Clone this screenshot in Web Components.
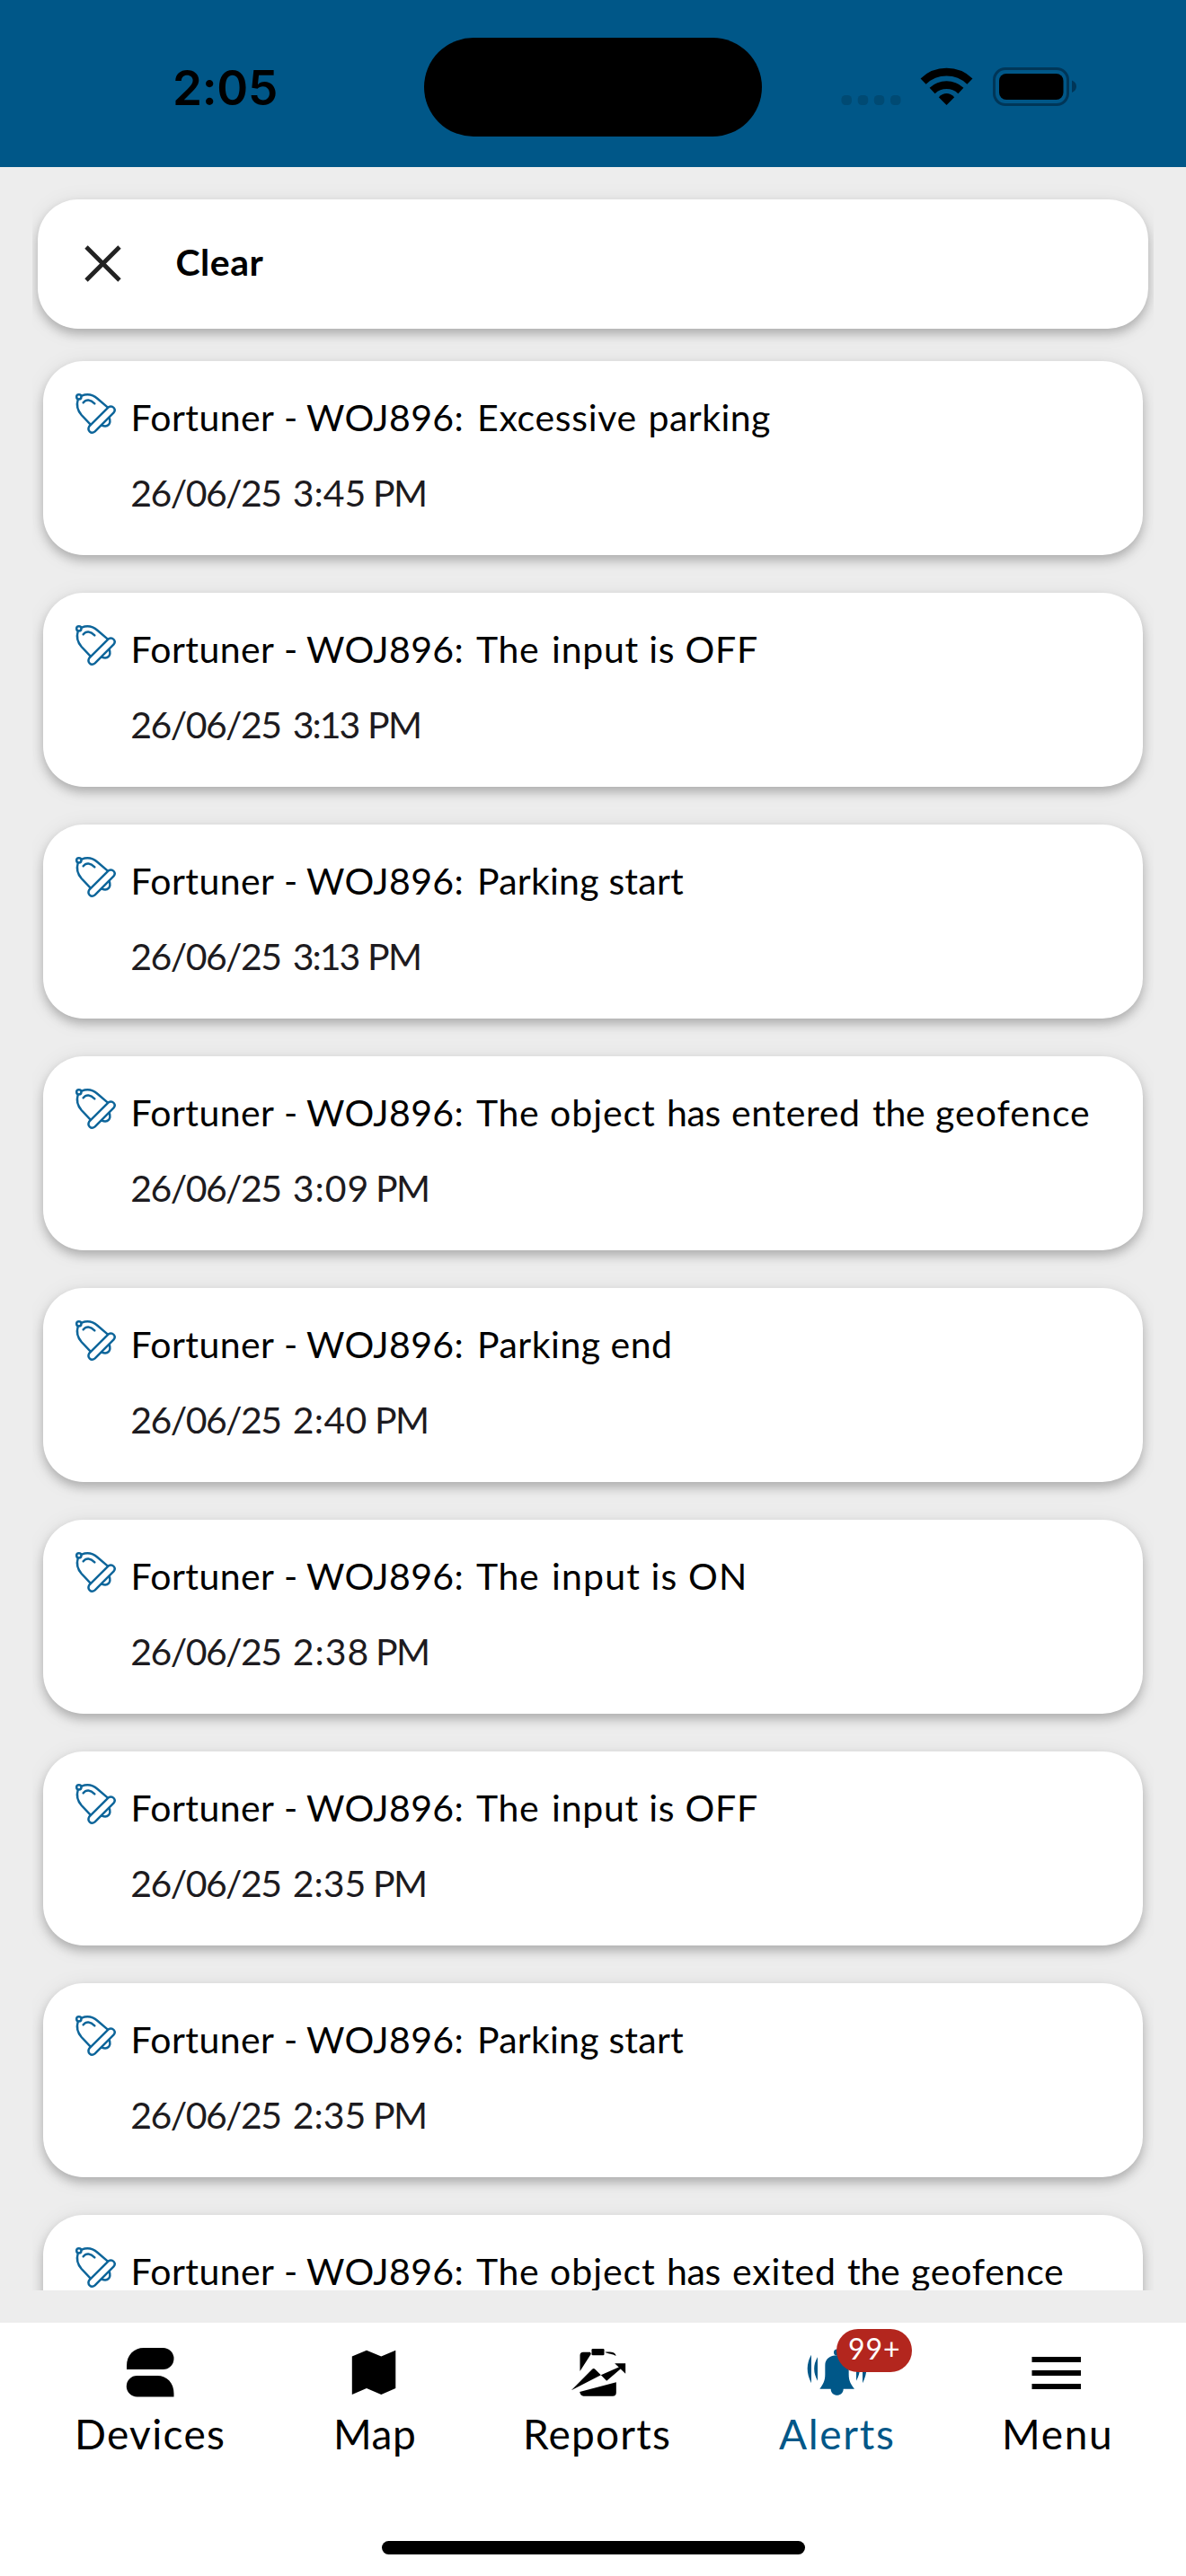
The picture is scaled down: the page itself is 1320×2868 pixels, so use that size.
<!DOCTYPE html>
<html lang="en">
<head>
<meta charset="utf-8">
<title>Alerts</title>
<style>
html,body{margin:0;padding:0}
body{width:1320px;height:2868px;overflow:hidden;background:#ededed;font-family:Lato,"Open Sans",sans-serif;color:#000}
</style>
</head>
<body>
<alerts-app></alerts-app>
<script>
const define = (name, html, setup) => customElements.define(name, class extends HTMLElement {
  connectedCallback() {
    if (this.shadowRoot) return;
    const t = document.createElement('template');
    t.innerHTML = typeof html === 'function' ? html(this) : html;
    this.attachShadow({mode: 'open'}).append(t.content.cloneNode(true));
    if (setup) setup(this);
  }
});

// A single line of text tracked so that each "|"-separated group of words
// inks exactly the matching "start end" pair in `ink` (pixels from the host's left).
const ctx = document.createElement('canvas').getContext('2d');
define('fit-text', `<style>
  :host{display:block;flex:none;white-space:pre}
  div{display:block;width:max-content}
</style><div></div>`, el => {
  const line = el.shadowRoot.querySelector('div');
  const cs = getComputedStyle(line);
  ctx.font = `${cs.fontWeight} ${cs.fontSize} ${cs.fontFamily}`;
  const space = ctx.measureText(' ').width;
  const stops = el.getAttribute('ink').split(',').map(p => p.trim().split(' ').map(Number));
  let pen = 0;
  el.getAttribute('text').split('|').forEach((text, i) => {
    const [a, b] = stops[i], m = ctx.measureText(text);
    const ink = m.actualBoundingBoxLeft + m.actualBoundingBoxRight;
    const track = text.length > 1 ? (b - a - ink) / (text.length - 1) : 0;
    const origin = a + m.actualBoundingBoxLeft;
    if (i) {
      const gap = document.createElement('span');
      gap.textContent = ' ';
      gap.style.letterSpacing = (origin - pen - space).toFixed(3) + 'px';
      line.append(gap);
    } else line.style.marginLeft = origin.toFixed(2) + 'px';
    const span = document.createElement('span');
    span.textContent = text;
    span.style.letterSpacing = track.toFixed(3) + 'px';
    line.append(span);
    pen = origin + m.width + text.length * track;
  });
  el.style.width = stops[stops.length - 1][1] + 'px';
});

define('status-bar', `<style>
  :host{display:flex;box-sizing:border-box;height:186px;background:#005788;padding:42px 0 0 195px}
  fit-text{font:600 53px/64px Inter,sans-serif;margin-top:24px}
  .island{flex:none;width:376px;height:110px;border-radius:55px;background:#000;margin-left:165px}
  svg{flex:none;margin:28px 0 0 84px;display:block}
</style>
<fit-text text="2:05" ink="0 112"></fit-text>
<div class="island"></div>
<svg width="270" height="54" viewBox="932 70 270 54">
  <g fill="#004a73"><rect x="936.5" y="106" width="11.5" height="11" rx="4.5"/><rect x="954.7" y="106" width="11.5" height="11" rx="4.5"/><rect x="972.8" y="106" width="11.5" height="11" rx="4.5"/><rect x="991" y="106" width="11.5" height="11" rx="4.5"/></g>
  <path d="M1027.6 90.6A37.5 37.5 0 0 1 1079.4 90.6M1037.6 101A23.2 23.2 0 0 1 1069.4 101" fill="none" stroke="#000" stroke-width="8.8"/>
  <path d="M1053.5 117L1044.8 108.2Q1053.5 100 1062.2 108.2Z"/>
  <rect x="1106.5" y="76.5" width="82" height="40" rx="12.5" fill="none" stroke="#003658" stroke-width="3"/>
  <rect x="1112" y="82" width="71.5" height="29" rx="8"/>
  <path d="M1193 89.5Q1198 91.5 1198 96.3T1193 103Z" fill="#003658"/>
</svg>`);

define('clear-card', `<style>
  :host{display:flex;align-items:flex-start;box-sizing:border-box;height:144px;margin:36px 6px 0;border-radius:45px;background:#fff;padding:51px 0 0 51.5px;
  box-shadow:0 6px 11px rgba(0,0,0,.22),0 3px 24px rgba(0,0,0,.08)}
  svg{display:block;width:41px;height:41px}
  fit-text{font:bold 41px/49px Lato,sans-serif;margin:-6px 0 0 62px}
</style>
<svg viewBox="0 0 41 41"><path d="M2 2L39 39M39 2L2 39" stroke="#222" stroke-width="4.8"/></svg>
<fit-text text="Clear" ink="0 97"></fit-text>`);

define('alert-card', el => {
  const date = el.getAttribute('date'), end = +el.getAttribute('date-end');
  return `<style>
  :host{display:block;flex:none;box-sizing:border-box;height:216px;margin:0 12px;border-radius:45px;background:#fff;padding:36px 0 0 36px;
  font:400 41px/49px Lato,sans-serif;box-shadow:0 6px 11px rgba(0,0,0,.22),0 3px 24px rgba(0,0,0,.08)}
  .row{display:flex;align-items:flex-start;height:51px}
  svg{display:block;width:45px;height:45px;margin-right:20px;flex:none;overflow:visible}
  .row fit-text{margin:2px 0 0 -149px}
  .date{margin:35px 0 0 -84px;color:#1d1b20}
</style>
<div class="row">
<svg viewBox="0 0 135 135" fill="none" stroke="#0d659a" stroke-width="7.4" stroke-linecap="round" stroke-linejoin="round">
  <circle cx="11.5" cy="11.5" r="8"/>
  <path d="M21 8C40 0 59 5 74 18L107 46M8 21C2 42 7 57 20 72L50 104M26 31C36 18 50 20 64 34"/>
  <path d="M110 46C124 39 138 52 127 65L65 127C52 138 38 124 46 110Z"/>
  <path d="M113 81C120 102 108 115 88 107"/>
</svg>
<fit-text text="Fortuner|-|WOJ896:|${el.getAttribute('message')}" ink="148.5 305,318 328,341 513.5,${el.getAttribute('ink')}"></fit-text>
</div>
${date ? `<fit-text class="date" text="${date}" ink="146.3 312.3,326.7 ${end - 67.5},${end - 55} ${end}"></fit-text>` : ''}`;
});

define('nav-item', el => `<style>
  :host{display:flex;flex-direction:column;align-items:center;flex:none;position:relative;padding-top:20px;color:${el.hasAttribute('active') ? '#005788' : '#000'};
  font:400 46px/55px Lato,sans-serif}
  ::slotted(svg){display:block;width:70px;height:70px;margin-bottom:6px;fill:currentColor}
</style><slot></slot><fit-text text="${el.getAttribute('label')}" ink="0 ${el.getAttribute('ink')}"></fit-text>`);

define('count-badge', `<style>
  :host{position:absolute;left:64px;top:7px;width:84px;height:48px;box-sizing:border-box;padding:2.5px 0 0 14px;border-radius:24px;background:#b3261e;color:#fff;font:400 32px/38px Lato,sans-serif}
</style><fit-text text="99+" ink="0 55"></fit-text>`);

define('bottom-nav', `<style>
  :host{display:flex;flex-direction:column;height:282px;background:#fff}
  nav{display:flex;padding-left:87px;height:243px}
  .bar{width:471px;height:15px;border-radius:7.5px;background:#000;margin:0 auto}
</style>
<nav>
<nav-item label="Devices" ink="162"><svg viewBox="133 2606 70 70"><path d="M141 2638V2634C141 2622 149 2614 160 2614H181.500A12 12 0 0 1 181.500 2638ZM193.500 2668.500H152.500A11.700 11.700 0 0 1 152.500 2645H175C186 2645 193.500 2653 193.500 2665Z"/></svg></nav-item>
<nav-item label="Map" ink="86" style="margin-left:126px"><svg viewBox="382.700 2606 70 70"><path d="M391.500 2623.500L407.700 2616.800L424 2623.500L440 2616.800V2659L424 2666L407.700 2659L391.500 2666Z"/></svg></nav-item>
<nav-item label="Reports" ink="159" style="margin-left:125px"><svg viewBox="148.500 48 210 210"><rect x="231" y="75" width="42" height="22" rx="4"/><path d="M192 150V97Q192 86 203 86H226Q228 89 229 92ZM275 86C297 84 312 87 312 99C301 91 288 93 275 86ZM163 214L233 143Q238 139 243 144L262 163ZM262 163L325 135L330 140L281 182ZM308 124H344V158ZM191 219L313 187V221Q313 233 301 233H204Q194 233 191 219Z"/></svg></nav-item>
<nav-item label="Alerts" ink="127" active style="margin-left:122px"><svg viewBox="165 108 210 210"><path d="M186 155Q160 200 186 250ZM207 163Q184 201 207 242ZM357 155Q383 200 357 250ZM336 163Q359 201 336 242Z"/><circle cx="271.500" cy="147" r="10.500"/><path d="M232 190C232 170 248 157 271.500 157S311 170 311 190V220C311 245 319 255 330 269H293C293 297 251 297 251 269H214C224 255 232 245 232 220Z"/></svg><count-badge></count-badge></nav-item>
<nav-item label="Menu" ink="116" style="margin-left:125px"><svg viewBox="1141.500 2606 70 70"><path d="M1148 2624h54.500v6h-54.500ZM1148 2639h54.500v6h-54.500ZM1148 2654h54.500v6h-54.500Z"/></svg></nav-item>
</nav>
<div class="bar"></div>`);

const alerts = [
  ['Excessive|parking', '534 707.5,723.5 857', '26/06/25|3:45|PM', 473],
  ['The|input is OFF', '530 599,616 842', '26/06/25|3:13|PM', 467],
  ['Parking start', '534 761', '26/06/25|3:13|PM', 467],
  ['The|object|has|entered|the|geofence', '530 599,613 729,744 801.5,815 955,971 1029,1042 1212', '26/06/25|3:09|PM', 476],
  ['Parking end', '534 746', '26/06/25|2:40|PM', 475],
  ['The|input is ON', '530 599,616 828', '26/06/25|2:38|PM', 476],
  ['The|input is OFF', '530 599,616 842', '26/06/25|2:35|PM', 473],
  ['Parking start', '534 761', '26/06/25|2:35|PM', 473],
  ['The|object|has|exited|the|geofence', '530 599,613 729,744 801.5,816 928,943 1001,1015 1183', '', 0]
];

define('alerts-app', `<style>
  :host{display:flex;flex-direction:column;width:1320px;height:2868px}
  main{height:2364px;margin:0 36px 36px;overflow:hidden}
  .list{display:flex;flex-direction:column;gap:42px;margin-top:36px}
</style>
<status-bar></status-bar>
<main><clear-card></clear-card><div class="list">
${alerts.map(([m, ink, d, de]) => `<alert-card message="${m}" ink="${ink}" date="${d}" date-end="${de}"></alert-card>`).join('')}
</div></main>
<bottom-nav></bottom-nav>`);
</script>
</body>
</html>
